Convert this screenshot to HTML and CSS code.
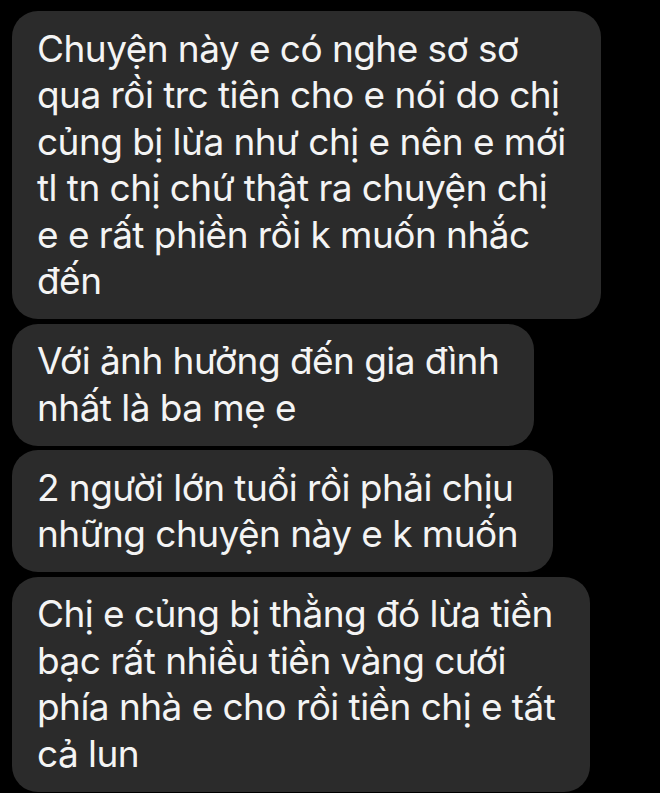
FILE: index.html
```html
<!DOCTYPE html>
<html lang="vi">
<head>
  <meta charset="UTF-8" />
  <meta name="viewport" content="width=device-width, initial-scale=1.0"/>
  <title>Tin nhắn</title>
  <link rel="stylesheet" href="styles.css">
</head>
<body>
  <div class="thread">
    <div class="bubble">
      Chuyện này e có nghe sơ sơ<br>
      qua rồi trc tiên cho e nói do chị<br>
      củng bị lừa như chị e nên e mới<br>
      tl tn chị chứ thật ra chuyện chị<br>
      e e rất phiền rồi k muốn nhắc<br>
      đến
    </div>
    <div class="bubble">
      Với ảnh hưởng đến gia đình<br>
      nhất là ba mẹ e
    </div>
    <div class="bubble">
      2 người lớn tuổi rồi phải chịu<br>
      những chuyện này e k muốn
    </div>
    <div class="bubble">
      Chị e củng bị thằng đó lừa tiền<br>
      bạc rất nhiều tiền vàng cưới<br>
      phía nhà e cho rồi tiền chị e tất<br>
      cả lun
    </div>
  </div>
</body>
</html>
```

FILE: styles.css
```css
* {
  box-sizing: border-box;
}

body {
  margin: 0;
  background-color: #000;
  font-family: 'Inter', 'Noto Sans', sans-serif;
  color: #f4f4f4;
}

.thread {
  display: flex;
  flex-direction: column;
  align-items: flex-start;
  gap: 4.5px;
  padding: 11px 0 0 12px;
}

.bubble {
  background-color: #2b2b2b;
  border-radius: 26px;
  padding: 14.5px 35px 14.5px 25px;
  font-size: 37px;
  line-height: 46.5px;
  letter-spacing: -0.55px;
  white-space: nowrap;
}
```
